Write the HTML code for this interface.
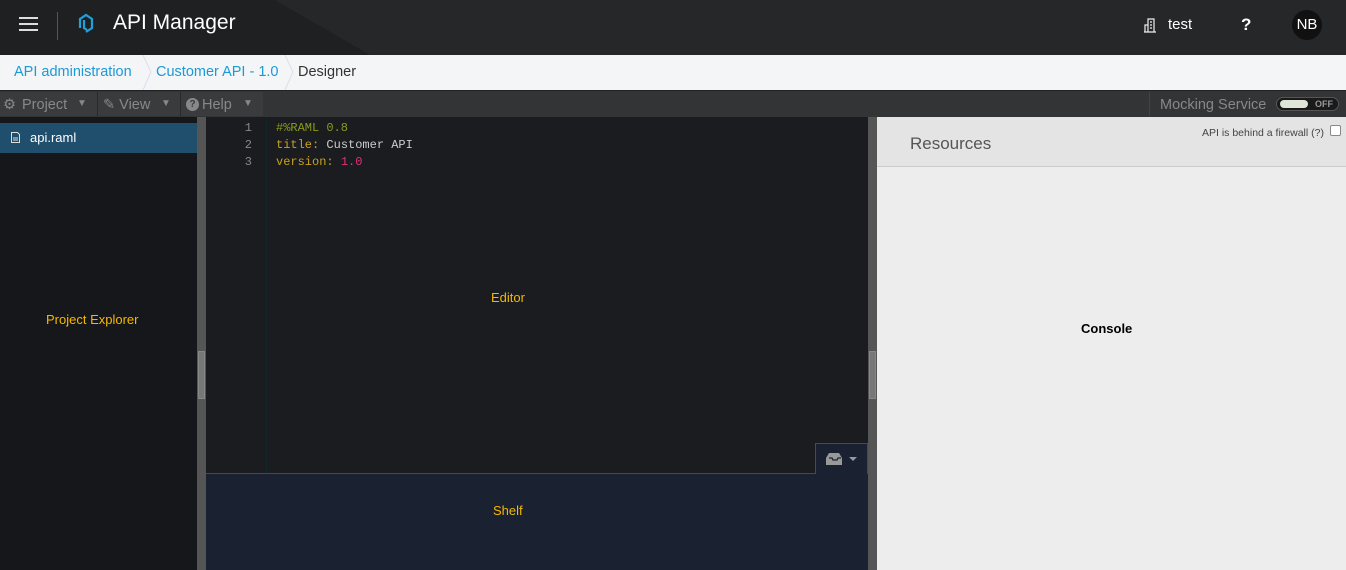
<!DOCTYPE html>
<html><head><style>
*{margin:0;padding:0;box-sizing:border-box}
body{width:1346px;height:570px;overflow:hidden;font-family:"Liberation Sans",sans-serif;background:#1a1b1f;position:relative}
.a{position:absolute}
.lbl{color:#f5b800;font-size:13px}
</style></head><body>
<div class="a" style="left:0;top:0;width:1346px;height:55px;background:#262728"></div>
<div class="a" style="left:0;top:0;width:370px;height:55px;background:#1f2021;clip-path:polygon(0 0,275px 0,370px 55px,0 55px)"></div>
<div class="a" style="left:19px;top:17px;width:19px;height:2px;background:#ddd"></div>
<div class="a" style="left:19px;top:23px;width:19px;height:2px;background:#ddd"></div>
<div class="a" style="left:19px;top:29px;width:19px;height:2px;background:#ddd"></div>
<div class="a" style="left:57px;top:12px;width:1px;height:28px;background:#555"></div>
<svg class="a" style="left:76px;top:12px" width="20" height="22" viewBox="0 0 20 22"><path d="M4 16V7l6-4 6 4v9l-6 4" fill="none" stroke="#1fa0d8" stroke-width="2.2"/><path d="M8 8v8l3 2" fill="none" stroke="#1fa0d8" stroke-width="2.2"/></svg>
<div class="a" style="left:113px;top:11px;color:#fff;font-size:21px">API Manager</div>
<svg class="a" style="left:1143px;top:17px" width="14" height="16" viewBox="0 0 14 16"><path d="M1 15h12M2 15V8h3M5 15V2h6v13M7 5h2M7 8h2M7 11h2" fill="none" stroke="#eee" stroke-width="1.2"/></svg>
<div class="a" style="left:1168px;top:16px;color:#fff;font-size:15px">test</div>
<div class="a" style="left:1241px;top:15px;color:#fff;font-size:17px;font-weight:bold">?</div>
<div class="a" style="left:1292px;top:10px;width:30px;height:30px;border-radius:50%;background:#111;color:#fff;font-size:15px;text-align:center;line-height:30px">NB</div>
<div class="a" style="left:0;top:55px;width:1346px;height:35px;background:#f4f5f7;font-size:14.5px;line-height:35px">
<span class="a" style="left:14px;color:#1a9ad6">API administration</span>
<span class="a" style="left:156px;color:#1a9ad6">Customer API - 1.0</span>
<span class="a" style="left:298px;color:#333">Designer</span>
<svg class="a" style="left:141px;top:0" width="12" height="35"><path d="M2 0l8 17-8 18" fill="none" stroke="#dde" /></svg>
<svg class="a" style="left:283px;top:0" width="12" height="35"><path d="M2 0l8 17-8 18" fill="none" stroke="#dde"/></svg>
</div>
<div class="a" style="left:0;top:90px;width:1346px;height:27px;background:#333436;border-top:1px solid #222"></div>
<div class="a" style="left:0;top:92px;width:263px;height:24px;background:#3a3b3d;font-size:14.5px;color:#888;line-height:24px">
<span class="a" style="left:3px;top:1px">⚙</span><span class="a" style="left:22px;top:1px">Project</span><span class="a" style="left:77px;font-size:10px">▼</span>
<span class="a" style="left:97px;width:1px;height:24px;background:#2a2a2a"></span>
<span class="a" style="left:103px;top:1px">✎ View</span><span class="a" style="left:161px;font-size:10px">▼</span>
<span class="a" style="left:180px;width:1px;height:24px;background:#2a2a2a"></span>
<span class="a" style="left:186px;top:6px;width:13px;height:13px;border-radius:50%;background:#888;color:#3a3b3d;font-size:10px;font-weight:bold;line-height:13px;text-align:center">?</span><span class="a" style="left:202px;top:1px">Help</span><span class="a" style="left:243px;font-size:10px">▼</span>
</div>
<div class="a" style="left:1149px;top:92px;width:197px;height:24px;background:#333436;border-left:1px solid #444;font-size:14.5px;color:#888;line-height:24px"><span class="a" style="left:10px;top:1px">Mocking Service</span>
<div class="a" style="left:126px;top:5px;width:63px;height:14px;border-radius:7px;background:#1a1a1a;border:1px solid #555"><div class="a" style="left:3px;top:2px;width:28px;height:8px;border-radius:4px;background:#dfe5d8"></div><span class="a" style="left:38px;top:-6px;font-size:9px;font-weight:bold;color:#999">OFF</span></div></div>
<div class="a" style="left:0;top:117px;width:197px;height:453px;background:#16171b"></div>
<div class="a" style="left:0;top:123px;width:197px;height:30px;background:#1f4f6c;color:#fff;font-size:13px;line-height:30px;padding-left:30px">api.raml</div>
<svg class="a" style="left:11px;top:132px" width="9" height="11"><path d="M.5.5h6l2 2v8h-8z" fill="none" stroke="#ddd"/><path d="M2 6h5M2 8h5" stroke="#ddd"/></svg>
<div class="a lbl" style="left:46px;top:312px">Project Explorer</div>
<div class="a" style="left:197px;top:117px;width:9px;height:453px;background:#555"></div>
<div class="a" style="left:198px;top:351px;width:7px;height:48px;background:#777;border:1px solid #888"></div>
<div class="a" style="left:206px;top:117px;width:662px;height:356px;background:#1b1c20"></div>
<div class="a" style="left:266px;top:117px;width:1px;height:356px;background:#10282c"></div>
<div class="a" style="font-family:'Liberation Mono',monospace;font-size:12px;line-height:17px;left:206px;top:120px;width:46px;text-align:right;color:#888">1<br>2<br>3</div>
<div class="a" style="font-family:'Liberation Mono',monospace;font-size:12px;line-height:17px;left:276px;top:120px;color:#ccc;white-space:pre"><span style="color:#8a9a1a">#%RAML 0.8</span>
<span style="color:#c8a020">title:</span> Customer API
<span style="color:#c8a020">version:</span> <span style="color:#e0307a">1.0</span></div>
<div class="a lbl" style="left:491px;top:290px">Editor</div>
<div class="a" style="left:206px;top:473px;width:662px;height:97px;background:#1a2130;border-top:1px solid #3a4c60"></div>
<div class="a" style="left:815px;top:443px;width:53px;height:31px;background:#1a2130;border:1px solid #3a4c60;border-bottom:none"></div>
<svg class="a" style="left:825px;top:452px" width="36" height="14"><path d="M1 13V6l3-5h10l3 5v7z" fill="#999"/><path d="M4 6h3l1 2h4l1-2h3" fill="none" stroke="#1a2130" stroke-width="1.3"/><path d="M24 5h8l-4 4z" fill="#999"/></svg>
<div class="a lbl" style="left:493px;top:503px">Shelf</div>
<div class="a" style="left:868px;top:117px;width:9px;height:453px;background:#555"></div>
<div class="a" style="left:869px;top:351px;width:7px;height:48px;background:#777;border:1px solid #888"></div>
<div class="a" style="left:877px;top:117px;width:469px;height:453px;background:#ededed"></div>
<div class="a" style="left:877px;top:117px;width:469px;height:50px;background:#e4e4e4;border-bottom:1px solid #ccc"></div>
<div class="a" style="left:910px;top:134px;font-size:17px;color:#555">Resources</div>
<div class="a" style="left:1202px;top:127px;font-size:10.5px;color:#444">API is behind a firewall (?)</div>
<div class="a" style="left:1330px;top:125px;width:11px;height:11px;border:1px solid #888;border-radius:2px;background:#fff"></div>
<div class="a" style="left:1081px;top:321px;font-size:13px;font-weight:bold;color:#000">Console</div>
</body></html>
